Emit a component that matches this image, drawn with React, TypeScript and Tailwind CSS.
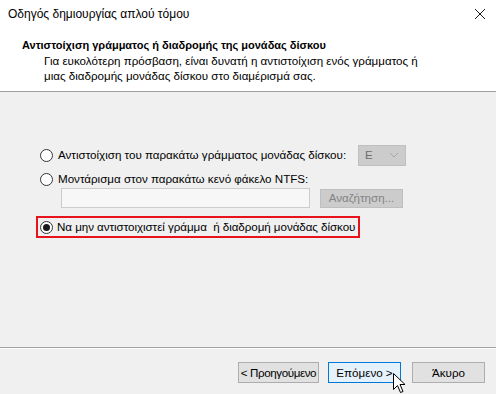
import React from 'react';

const Radio: React.FC<{ checked?: boolean }> = ({ checked }) => (
  <span className="flex h-[13px] w-[13px] shrink-0 items-center justify-center rounded-full border border-[#333333] bg-white">
    {checked && <span className="h-[7px] w-[7px] rounded-full bg-[#1a1a1a]" />}
  </span>
);

export default function App() {
  return (
    <div
      className="relative flex h-[394px] w-[496px] flex-col overflow-hidden whitespace-nowrap bg-[#f0f0f0] text-[11.6px] text-black"
      style={{ fontFamily: '"Liberation Sans", Arial, sans-serif' }}
    >
      {/* Header */}
      <div className="h-[92px] shrink-0 border-b border-[#a0a0a0] bg-white">
        <div className="flex h-[27px] items-center justify-between pl-2 pr-[10px]">
          <span className="text-[12px]">Οδηγός δημιουργίας απλού τόμου</span>
          <svg width="12" height="12" viewBox="0 0 12 12" className="mt-[1px]">
            <path d="M1 1 L11 11 M11 1 L1 11" stroke="#1a1a1a" strokeWidth="1" />
          </svg>
        </div>
        <div className="pl-[22px] pt-[11px] leading-[15px]">
          <div className="text-[11px] font-bold">Αντιστοίχιση γράμματος ή διαδρομής της μονάδας δίσκου</div>
          <div className="pl-[22px]">
            Για ευκολότερη πρόσβαση, είναι δυνατή η αντιστοίχιση ενός γράμματος ή
            <br />
            μιας διαδρομής μονάδας δίσκου στο διαμέρισμά σας.
          </div>
        </div>
      </div>

      {/* Body */}
      <div className="flex-1 pl-[40px] pt-[52px]">
        <div className="flex h-[22px] items-center">
          <Radio />
          <span className="ml-[5px] w-[300px]">Αντιστοίχιση του παρακάτω γράμματος μονάδας δίσκου:</span>
          <div className="flex h-[21px] w-[48px] items-center justify-between border border-[#bfbfbf] bg-[#cccccc] pl-[6px] pr-[6px] text-[#6d6d6d]">
            <span>E</span>
            <svg width="10" height="6" viewBox="0 0 10 6">
              <path d="M1 1 L5 5 L9 1" fill="none" stroke="#a6a6a6" strokeWidth="1" />
            </svg>
          </div>
        </div>
        <div className="mt-[2px] flex h-[22px] items-center">
          <Radio />
          <span className="ml-[5px]">Μοντάρισμα στον παρακάτω κενό φάκελο NTFS:</span>
        </div>
        <div className="mt-[-2px] flex items-center pl-[21px]">
          <div className="h-[20px] w-[249px] border border-[#cccccc] bg-[#f7f7f7]" />
          <div className="ml-[10px] flex h-[19px] w-[83px] items-center justify-center border border-[#bfbfbf] bg-[#cccccc] text-[#838383]">
            Αναζήτηση...
          </div>
        </div>
        <div className="ml-[-4px] mt-[8px] flex h-[22px] w-[324px] items-center border-2 border-[#e8131a] pl-[2px]">
          <Radio checked />
          <span className="ml-[4px] tracking-[-0.05px]">Να μην αντιστοιχιστεί γράμμα&nbsp; ή διαδρομή μονάδας δίσκου</span>
        </div>
      </div>

      {/* Footer */}
      <div className="h-[47px] shrink-0 border-t border-[#a0a0a0]">
        <div className="border-t border-white" />
        <div className="flex items-start pl-[238px] pt-[13px]">
          <div className="flex h-[21px] w-[81px] items-center justify-center border border-[#adadad] bg-[#e1e1e1] tracking-[-0.4px]">
            &lt; Προηγούμενο
          </div>
          <div className="ml-[9px] flex h-[21px] w-[73px] items-center justify-center border border-[#0078d7] bg-[#e5f1fb]">
            Επόμενο &gt;
          </div>
          <div className="ml-[11px] flex h-[21px] w-[73px] items-center justify-center border border-[#adadad] bg-[#e1e1e1]">
            Άκυρο
          </div>
        </div>
      </div>

      {/* Mouse cursor */}
      <svg
        width="13"
        height="21"
        viewBox="0 0 13 21"
        className="absolute left-[393px] top-[373px]"
      >
        <path
          d="M0.5 0.5 L0.5 16.5 L4.5 12.5 L7.5 19.5 L10 18.5 L7 11.5 L12 11.5 Z"
          fill="#ffffff"
          stroke="#000000"
          strokeWidth="1"
          strokeLinejoin="miter"
        />
      </svg>
    </div>
  );
}
